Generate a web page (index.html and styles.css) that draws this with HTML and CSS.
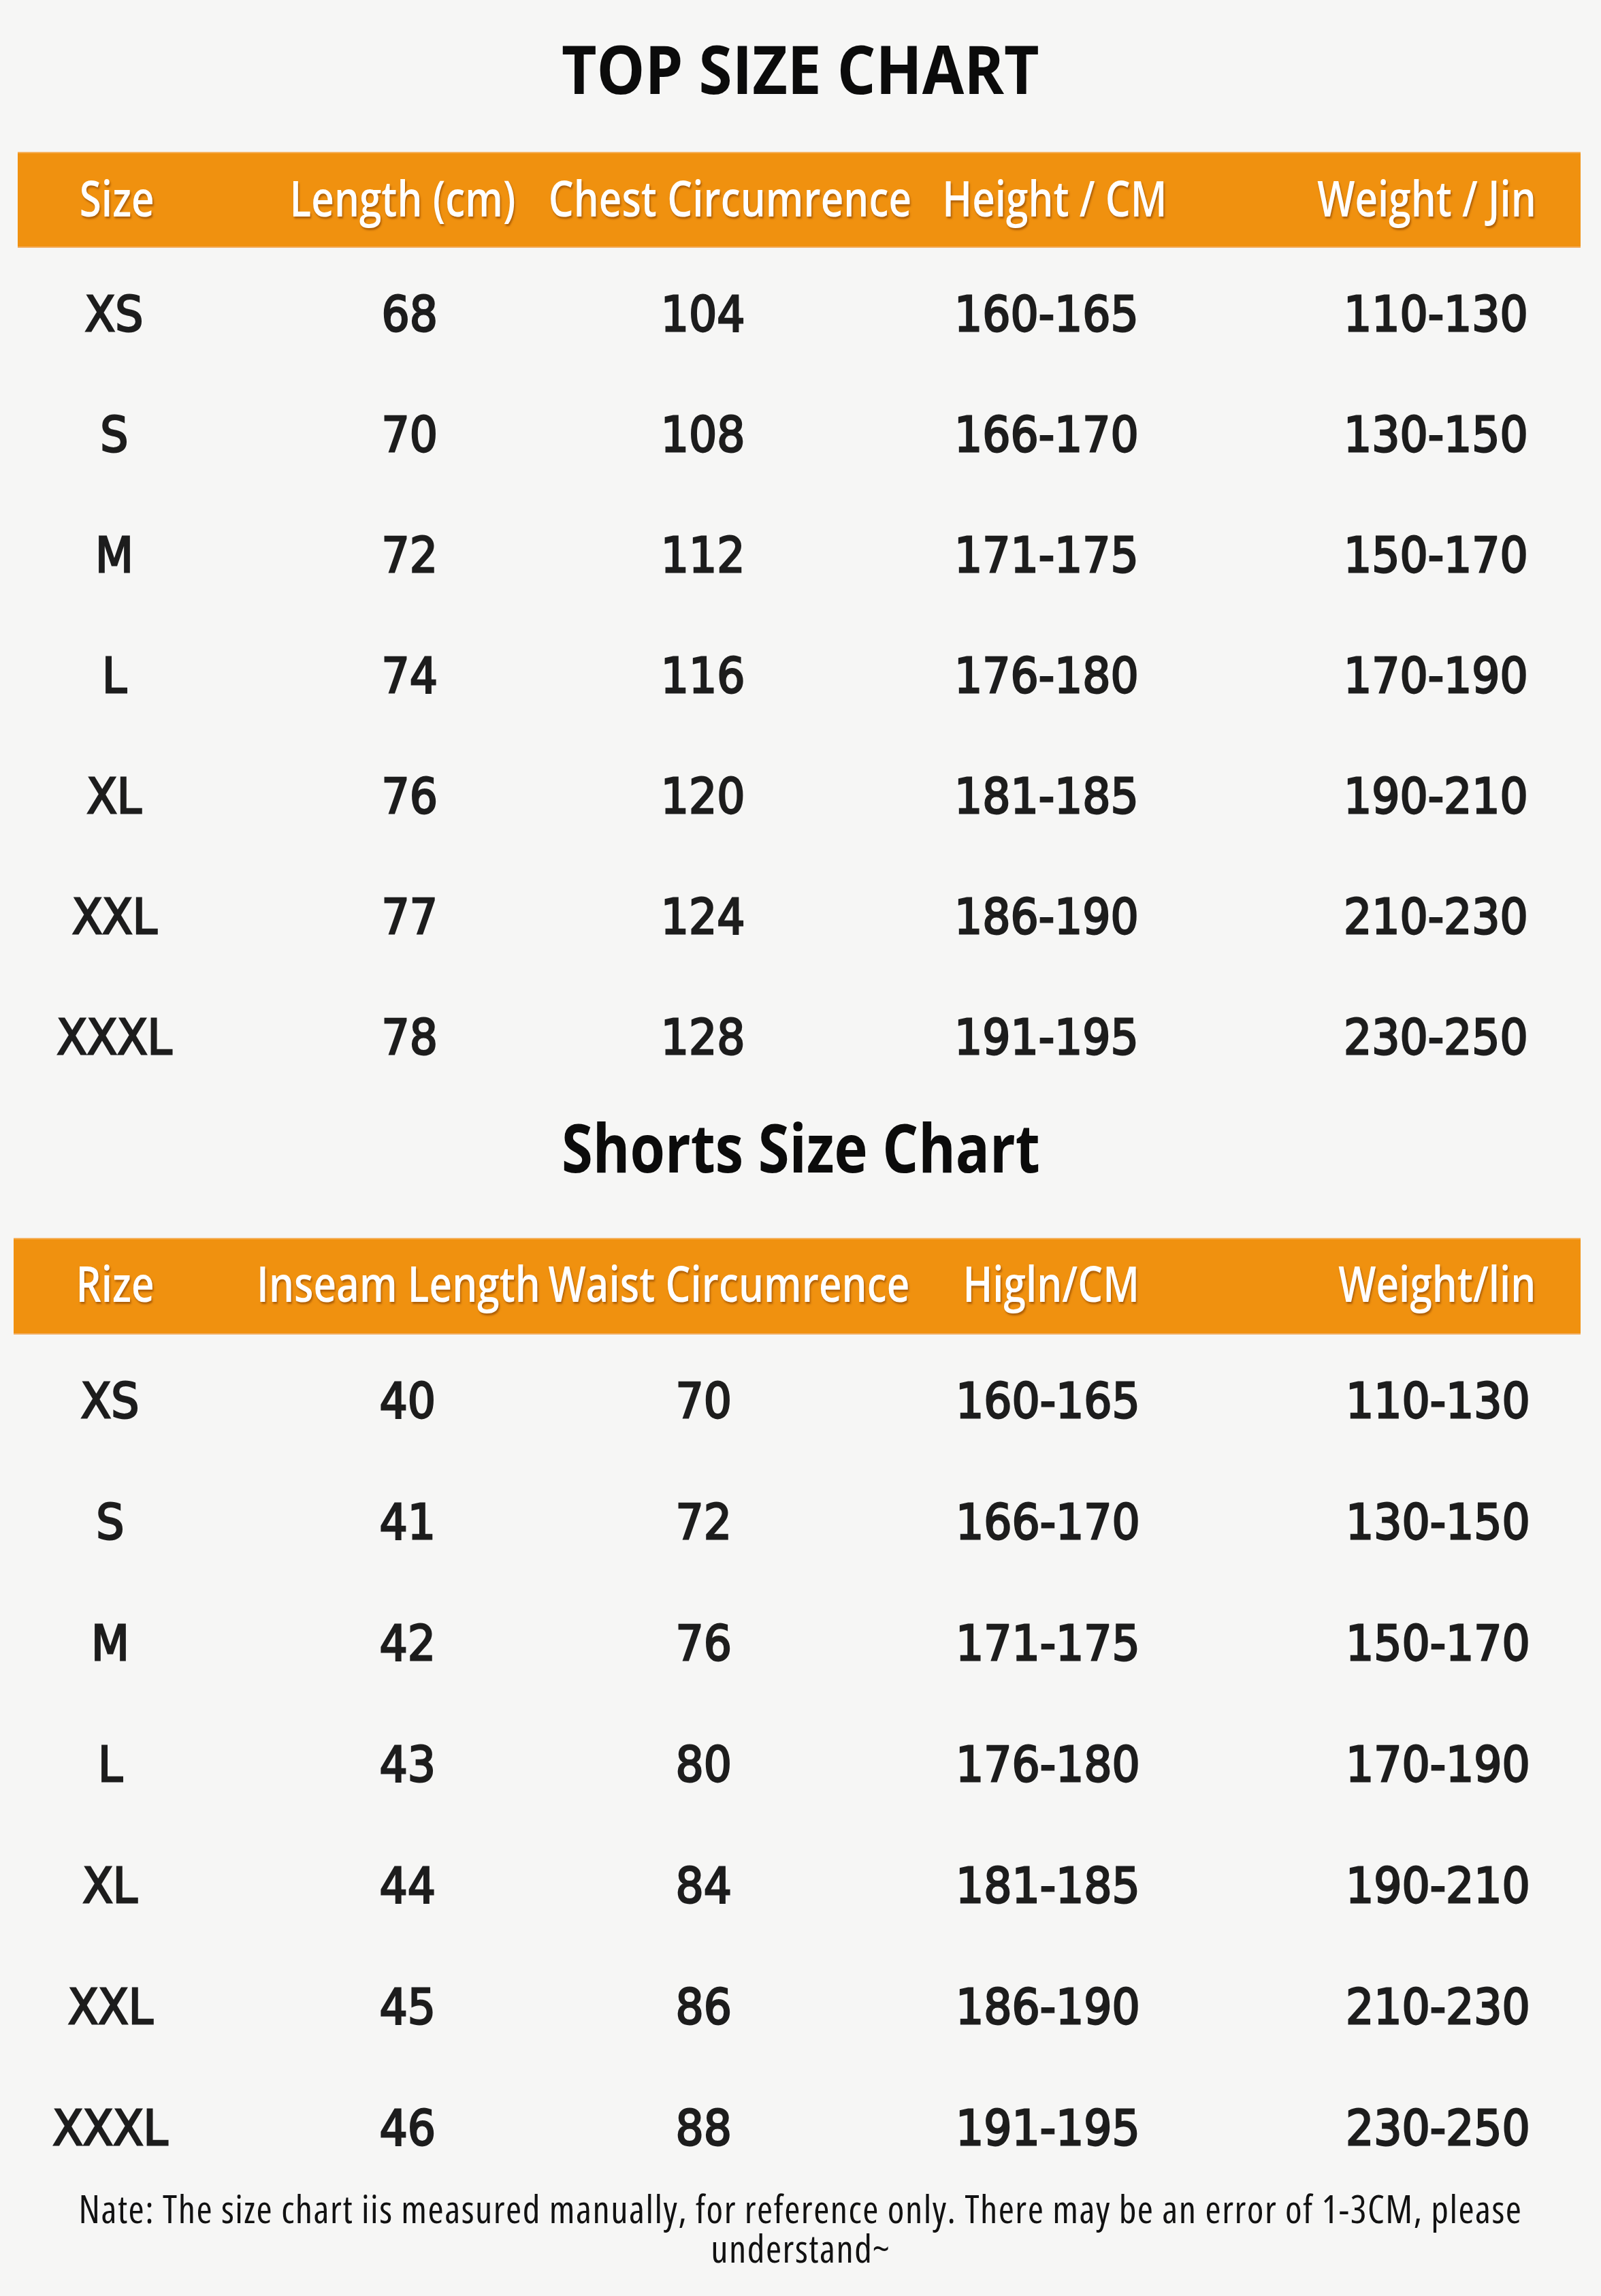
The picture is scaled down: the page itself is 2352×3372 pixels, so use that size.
FILE: index.html
```html
<!DOCTYPE html>
<html lang="en">
<head>
<meta charset="utf-8">
<title>Size Chart</title>
<link rel="stylesheet" href="styles.css">
</head>
<body>
<main class="page">
  <section class="chart chart-top">
    <h1 class="title"><span class="sq">TOP SIZE CHART</span></h1>
    <div class="bar bar-top">
      <div class="hrow hrow-top">
        <div class="hc"><span class="sqh">Size</span></div>
        <div class="hc"><span class="sqh">Length (cm)</span></div>
        <div class="hc"><span class="sqh">Chest Circumrence</span></div>
        <div class="hc"><span class="sqh">Height / CM</span></div>
        <div class="hc"><span class="sqh">Weight / Jin</span></div>
      </div>
    </div>
    <div class="rows rows-top">
      <div class="row"><div class="c"><span class="sqd">XS</span></div><div class="c"><span class="sqd">68</span></div><div class="c"><span class="sqd">104</span></div><div class="c"><span class="sqd">160-165</span></div><div class="c"><span class="sqd">110-130</span></div></div>
      <div class="row"><div class="c"><span class="sqd">S</span></div><div class="c"><span class="sqd">70</span></div><div class="c"><span class="sqd">108</span></div><div class="c"><span class="sqd">166-170</span></div><div class="c"><span class="sqd">130-150</span></div></div>
      <div class="row"><div class="c"><span class="sqd">M</span></div><div class="c"><span class="sqd">72</span></div><div class="c"><span class="sqd">112</span></div><div class="c"><span class="sqd">171-175</span></div><div class="c"><span class="sqd">150-170</span></div></div>
      <div class="row"><div class="c"><span class="sqd">L</span></div><div class="c"><span class="sqd">74</span></div><div class="c"><span class="sqd">116</span></div><div class="c"><span class="sqd">176-180</span></div><div class="c"><span class="sqd">170-190</span></div></div>
      <div class="row"><div class="c"><span class="sqd">XL</span></div><div class="c"><span class="sqd">76</span></div><div class="c"><span class="sqd">120</span></div><div class="c"><span class="sqd">181-185</span></div><div class="c"><span class="sqd">190-210</span></div></div>
      <div class="row"><div class="c"><span class="sqd">XXL</span></div><div class="c"><span class="sqd">77</span></div><div class="c"><span class="sqd">124</span></div><div class="c"><span class="sqd">186-190</span></div><div class="c"><span class="sqd">210-230</span></div></div>
      <div class="row"><div class="c"><span class="sqd">XXXL</span></div><div class="c"><span class="sqd">78</span></div><div class="c"><span class="sqd">128</span></div><div class="c"><span class="sqd">191-195</span></div><div class="c"><span class="sqd">230-250</span></div></div>
    </div>
  </section>

  <section class="chart chart-shorts">
    <h1 class="title title-shorts"><span class="sq sq-shorts">Shorts Size Chart</span></h1>
    <div class="bar bar-shorts">
      <div class="hrow hrow-shorts">
        <div class="hc"><span class="sqh">Rize</span></div>
        <div class="hc"><span class="sqh">Inseam Length</span></div>
        <div class="hc"><span class="sqh">Waist Circumrence</span></div>
        <div class="hc"><span class="sqh">Higln/CM</span></div>
        <div class="hc"><span class="sqh">Weight/lin</span></div>
      </div>
    </div>
    <div class="rows rows-shorts">
      <div class="row"><div class="c"><span class="sqd">XS</span></div><div class="c"><span class="sqd">40</span></div><div class="c"><span class="sqd">70</span></div><div class="c"><span class="sqd">160-165</span></div><div class="c"><span class="sqd">110-130</span></div></div>
      <div class="row"><div class="c"><span class="sqd">S</span></div><div class="c"><span class="sqd">41</span></div><div class="c"><span class="sqd">72</span></div><div class="c"><span class="sqd">166-170</span></div><div class="c"><span class="sqd">130-150</span></div></div>
      <div class="row"><div class="c"><span class="sqd">M</span></div><div class="c"><span class="sqd">42</span></div><div class="c"><span class="sqd">76</span></div><div class="c"><span class="sqd">171-175</span></div><div class="c"><span class="sqd">150-170</span></div></div>
      <div class="row"><div class="c"><span class="sqd">L</span></div><div class="c"><span class="sqd">43</span></div><div class="c"><span class="sqd">80</span></div><div class="c"><span class="sqd">176-180</span></div><div class="c"><span class="sqd">170-190</span></div></div>
      <div class="row"><div class="c"><span class="sqd">XL</span></div><div class="c"><span class="sqd">44</span></div><div class="c"><span class="sqd">84</span></div><div class="c"><span class="sqd">181-185</span></div><div class="c"><span class="sqd">190-210</span></div></div>
      <div class="row"><div class="c"><span class="sqd">XXL</span></div><div class="c"><span class="sqd">45</span></div><div class="c"><span class="sqd">86</span></div><div class="c"><span class="sqd">186-190</span></div><div class="c"><span class="sqd">210-230</span></div></div>
      <div class="row"><div class="c"><span class="sqd">XXXL</span></div><div class="c"><span class="sqd">46</span></div><div class="c"><span class="sqd">88</span></div><div class="c"><span class="sqd">191-195</span></div><div class="c"><span class="sqd">230-250</span></div></div>
    </div>
  </section>

  <footer class="note">
    <p class="note-text">Nate: The size chart iis measured manually, for reference only. There may be an error of 1-3CM, please understand~</p>
  </footer>
</main>
</body>
</html>
```

FILE: styles.css
```css
html, body {
  margin: 0;
  padding: 0;
  background: #f6f6f5;
}

.page {
  width: 2352px;
  height: 3372px;
  overflow: hidden;
  background: #f6f6f5;
  color: #1c1c1c;
}

/* Titles */
.title {
  margin: 0;
  padding-top: 50px;
  height: 99px;
  font-family: "Open Sans", "Noto Sans", sans-serif;
  font-weight: 700;
  font-size: 99px;
  line-height: 99px;
  color: #0b0b0b;
  display: flex;
  justify-content: center;
  white-space: nowrap;
}
.title-shorts {
  padding-top: 22px;
}
.sq {
  display: inline-block;
  transform: scaleX(0.9);
  transform-origin: center;
}
.sq-shorts {
  transform: scaleX(0.84);
}

/* Orange header bars */
.bar {
  background: #f0910f;
  box-shadow: inset 0 2px 0 #f6b25e, inset 0 -2px 0 #f2ae63;
}
.bar-top {
  margin: 74px 30px 0 26px;
  height: 141px;
}
.bar-shorts {
  margin: 85px 30px 0 20px;
  height: 142px;
}

.hrow {
  display: grid;
  height: 100%;
  box-sizing: border-box;
  align-items: center;
  font-family: "Open Sans", "Noto Sans", sans-serif;
  font-weight: 600;
  font-size: 73px;
  color: #ffffff;
  text-shadow: 2px 3px 3px rgba(120, 55, 0, 0.55);
}
.hrow-top {
  padding-left: 52px;
  padding-bottom: 8px;
  grid-template-columns: 188px 650px 312px 642px 452px;
}
.hrow-shorts {
  padding-left: 80px;
  padding-bottom: 12px;
  grid-template-columns: 138px 696px 274px 672px 462px;
}
.hc {
  display: flex;
  justify-content: center;
  white-space: nowrap;
}
.sqh {
  display: inline-block;
  transform: scaleX(0.8);
  transform-origin: center;
}

/* Data rows */
.rows-top {
  padding-top: 9px;
}
.rows-shorts {
  padding-top: 8px;
}
.row {
  display: grid;
  font-family: "DejaVu Sans", "Liberation Sans", sans-serif;
  font-weight: 400;
  font-size: 72px;
  color: #1d1d1d;
  -webkit-text-stroke: 2.8px #1d1d1d;
}
.rows-top .row {
  height: 177px;
  line-height: 177px;
  padding-left: 48px;
  grid-template-columns: 240px 628px 234px 774px 370px;
}
.rows-shorts .row {
  height: 178px;
  line-height: 178px;
  padding-left: 40px;
  grid-template-columns: 244px 630px 240px 770px 376px;
}
.c {
  display: flex;
  justify-content: center;
  white-space: nowrap;
}
.sqd {
  display: inline-block;
  transform: scaleX(0.9);
  transform-origin: center;
}

/* Note */
.note {
  padding: 0 100px;
}
.note-text {
  margin: 0;
  font-family: "Open Sans", "Noto Sans", sans-serif;
  font-weight: 400;
  font-size: 56px;
  font-stretch: 75%;
  letter-spacing: 1.5px;
  line-height: 58px;
  color: #111111;
  text-align: center;
}
```
